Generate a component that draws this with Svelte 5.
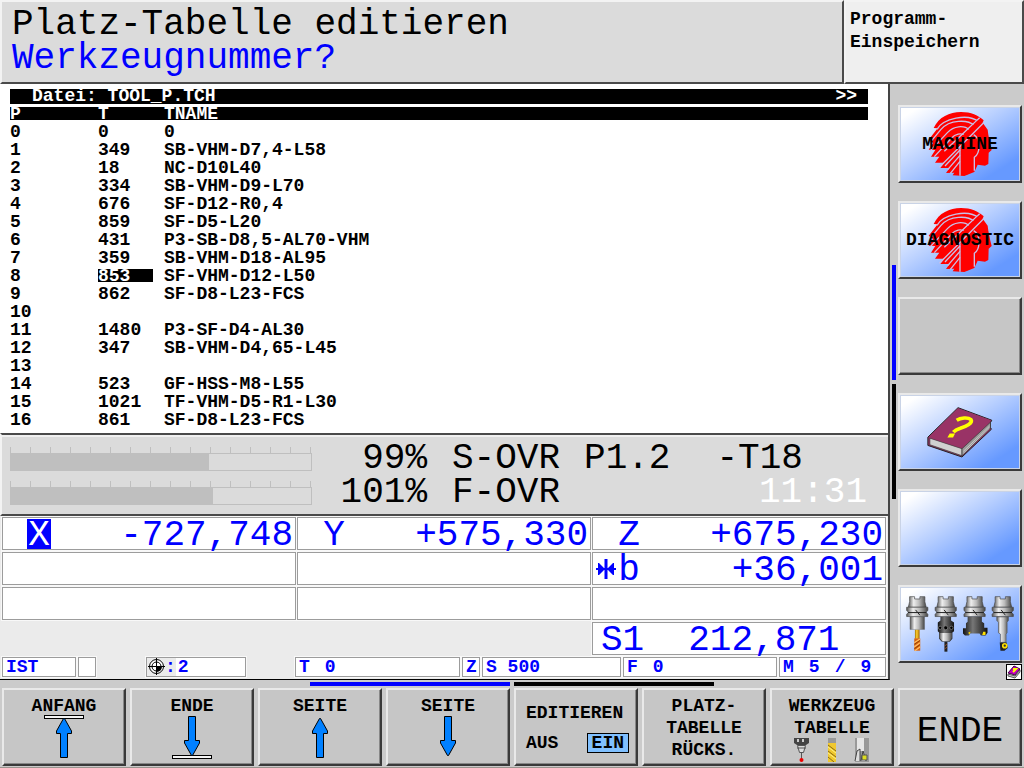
<script>
  const rows = [
    ['0', '0', '0'],
    ['1', '349', 'SB-VHM-D7,4-L58'],
    ['2', '18', 'NC-D10L40'],
    ['3', '334', 'SB-VHM-D9-L70'],
    ['4', '676', 'SF-D12-R0,4'],
    ['5', '859', 'SF-D5-L20'],
    ['6', '431', 'P3-SB-D8,5-AL70-VHM'],
    ['7', '359', 'SB-VHM-D18-AL95'],
    ['8', '853', 'SF-VHM-D12-L50'],
    ['9', '862', 'SF-D8-L23-FCS'],
    ['10', '', ''],
    ['11', '1480', 'P3-SF-D4-AL30'],
    ['12', '347', 'SB-VHM-D4,65-L45'],
    ['13', '', ''],
    ['14', '523', 'GF-HSS-M8-L55'],
    ['15', '1021', 'TF-VHM-D5-R1-L30'],
    ['16', '861', 'SF-D8-L23-FCS']
  ];
  const selected = 8;
  const gauges = [66, 67.2];
  const ticks = Array.from({ length: 16 }, (_, i) => i);
</script>

{#snippet head()}
  <svg class="head" viewBox="441 329 192 198" width="64" height="66" aria-hidden="true">
    <path fill="#f00" d="M458 380C474 347 505 332 540 332C570 332 592 342 608 357L605 364L620 385L622 400L628 430L632 446L623 454L622 488L612 493L590 490L580 512L550 524L515 522L520 514L495 515L506 500L478 500L490 484L462 484L475 466L450 466L463 446L443 445L456 425L443 415L470 381Z" />
    <g fill="none" stroke="#c9bfe6" stroke-width="4">
      <path d="M468 384C486 352 560 334 594 362" />
      <path d="M452 418L480 384C506 354 560 354 580 372" />
      <path d="M448 448L500 393C518 374 548 370 566 386" />
      <path d="M460 466L512 410C522 398 540 394 552 402" />
      <path d="M596 349L490 450M608 364L475 498M537 446L492 494M537 462L500 505M537 480L508 516" />
      <path d="M537 438V523M580 508V468C598 455 600 412 578 400" />
    </g>
    <path fill="#f00" d="M592 355L600 367L532 430L520 428ZM541 446H576V508L556 521H541Z" />
  </svg>
{/snippet}

{#snippet arrow(down, bar)}
  <svg class="arrow" viewBox="0 0 42 44" width="42" height="44" aria-hidden="true">
    <g transform={down ? 'rotate(180 21 22)' : undefined} stroke="#000">
      {#if bar}<rect x="1.500" y="0.500" width="39" height="3" fill="#f4f4f4" />{/if}
      <path fill="#0080ff" d="M20.500 3.500H21.500L28.500 16V18.500H24.500V42.500H17.500V18.500H13.500V16Z" />
    </g>
  </svg>
{/snippet}

{#snippet holder(x)}
  <g transform={`translate(${x} 0)`}>
    <path fill="url(#metal)" stroke="#444" stroke-width="2" d="M-23 73H-8V80H8V73H23V88L27 105H-27L-23 88Z" />
    <path fill="url(#metal)" stroke="#444" stroke-width="2" d="M-32 105H32V115L26 120L32 126V133H-32V126L-26 120L-32 115Z" />
    <path stroke="#222" stroke-width="3" d="M-28 121H28M-5 113L8 129" />
  </g>
{/snippet}

<div class="screen">
  <header>
    <div class="panel title">
      <h1>Platz-Tabelle editieren</h1>
      <label for="tool-number">Werkzeugnummer?</label>
    </div>
    <div class="panel mode">Programm-<br />Einspeichern</div>
  </header>

  <div class="body">
    <main>
      <section class="file">
        <div class="strip"><span>Datei: TOOL_P.TCH</span><span>&gt;&gt;</span></div>
        <table>
          <thead>
            <tr>
              <th class="place"><span>P</span></th>
              <th class="tool"><span>T</span></th>
              <th><span>TNAME</span></th>
            </tr>
          </thead>
          <tbody>
            {#each rows as [p, t, name], i}
              <tr>
                <td>{p}</td>
                <td class:editing={i === selected}>
                  {#if i === selected}<input id="tool-number" value={t} />{:else}{t}{/if}
                </td>
                <td>{name}</td>
              </tr>
            {/each}
          </tbody>
        </table>
      </section>

      <section class="panel override">
        <div class="gauges">
          {#each gauges as value}
            <div class="gauge">
              <div class="ticks">{#each ticks as tick (tick)}<i></i>{/each}</div>
              <div class="track"><div class="fill" style="width: {value}%"></div></div>
            </div>
          {/each}
        </div>
        <div class="percent"><div>99%</div><div>101%</div></div>
        <div class="info">
          <div><span>S-OVR</span><span>P1.2</span><span class="t18">-T18</span></div>
          <div><span>F-OVR</span><time>11:31</time></div>
        </div>
      </section>

      <section class="position">
        <div class="axes">
          <div class="cell"><i></i><b class="active">X</b><span>-727,748</span></div>
          <div class="cell"><i></i><b>Y</b><span>+575,330</span></div>
          <div class="cell"><i></i><b>Z</b><span>+675,230</span></div>
          <div class="cell"></div>
          <div class="cell"></div>
          <div class="cell">
            <i>
              <svg viewBox="0 0 20 20" width="20" height="20" aria-hidden="true">
                <path fill="none" stroke="#00f" stroke-width="3" d="M10 0V20" />
                <path fill="none" stroke="#00f" stroke-width="2" d="M0 10H20" />
                <path fill="#00f" d="M2 4H3L8 9V11L3 16H2ZM18 4H17L12 9V11L17 16H18Z" />
              </svg>
            </i>
            <b>b</b><span>+36,001</span>
          </div>
          <div class="cell"></div>
          <div class="cell"></div>
          <div class="cell"></div>
          <div class="cell spindle"><b>S1</b><span>212,871</span></div>
        </div>
        <div class="status">
          <div class="cell">IST</div>
          <div class="cell"></div>
          <div class="cell datum">
            <span class="preset">
              <svg viewBox="0 0 18 18" width="18" height="18" aria-hidden="true">
                <circle cx="9.500" cy="8.500" r="7" fill="#fff" stroke="#000" />
                <circle cx="9.500" cy="8.500" r="4.500" fill="none" stroke="#000" />
                <path d="M9.500 8.500H15A6 6 0 0 1 9.500 14Z" />
                <path fill="none" stroke="#000" d="M9.500 0V17M1 8.500H18" />
              </svg>:</span><span>2</span>
          </div>
          <div class="cell wide">T<span>0</span></div>
          <div class="cell">Z</div>
          <div class="cell">S 500</div>
          <div class="cell wide">F<span>0</span></div>
          <div class="cell modes"><span>M</span><span>5</span><span>/</span><span>9</span></div>
        </div>
      </section>
    </main>

    <aside>
      <div class="pages"><i class="on"></i><i></i></div>
      <div class="keys">
        <button class="key blue">{@render head()}<span>MACHINE</span></button>
        <button class="key blue">{@render head()}<span>DIAGNOSTIC</span></button>
        <button class="key" aria-label="Frei"></button>
        <button class="key blue" aria-label="Hilfe">
          <svg viewBox="108 78 204 160" width="68" height="53" aria-hidden="true">
            <path fill="#993366" stroke="#222" stroke-width="3" d="M113 172L204 83L306 121L302 128V144L305 148L216 232L113 197Z" />
            <path fill="#d0d0d0" stroke="#333" stroke-width="2" d="M119 175L216 207V228L119 195Z" />
            <path fill="#999" stroke="#333" stroke-width="2" d="M216 207L302 127V144L216 228Z" />
            <path fill="none" stroke="#ddd" stroke-width="2" d="M220 215L299 139M220 221L299 145" />
            <path fill="#993366" d="M116 172L204 85L304 121L215 204Z" />
            <path fill="none" stroke="#ff0" stroke-width="11" d="M200 121C211 114 234 111 243 119C250 130 229 139 211 145C201 148 195 151 190 157" />
            <path fill="#ff0" d="M179 161H195L189 173H172Z" />
          </svg>
        </button>
        <button class="key blue" aria-label="Frei"></button>
        <button class="key blue" aria-label="Werkzeuge">
          <svg viewBox="46 68 330 175" width="110" height="58" aria-hidden="true">
            <defs>
              <linearGradient id="metal">
                <stop offset="0" stop-color="#555" /><stop offset="0.300" stop-color="#eee" />
                <stop offset="0.600" stop-color="#bbb" /><stop offset="1" stop-color="#444" />
              </linearGradient>
              <linearGradient id="dark">
                <stop offset="0" stop-color="#111" /><stop offset="0.400" stop-color="#777" />
                <stop offset="1" stop-color="#111" />
              </linearGradient>
              <linearGradient id="brass">
                <stop offset="0" stop-color="#a07000" /><stop offset="0.400" stop-color="#ffd030" />
                <stop offset="1" stop-color="#a06000" />
              </linearGradient>
            </defs>
            {@render holder(82)}
            <path fill="url(#metal)" stroke="#555" d="M60 134H104V172H60Z" />
            <path fill="url(#brass)" d="M75 173H89V200H75Z" />
            <path fill="#d86010" d="M73 199H91V236H73Z" />
            <path stroke="#ffc060" stroke-width="4" d="M73 212L90 201M73 225L90 212M75 236L91 224" />
            <path stroke="#703000" stroke-width="2" d="M73 217L90 205M73 230L90 218" />
            {@render holder(168)}
            <path fill="url(#dark)" d="M152 134H184V145L193 151V177L188 181V200L180 209H156L148 200V181L144 177V151L152 145Z" />
            <path fill="url(#metal)" d="M149 183H187V198L179 207H158L149 198Z" />
            <g fill="#000" stroke="#888" stroke-width="2"><circle cx="151" cy="167" r="5" /><circle cx="168" cy="167" r="6" /><circle cx="185" cy="167" r="5" /></g>
            <path fill="#222" d="M164 209H173V239H164Z" />
            <path stroke="#c06030" stroke-width="2" d="M164 222L173 216M164 231L173 225" />
            {@render holder(255)}
            <path fill="url(#dark)" d="M234 134H277V149L284 153V167H294V182L288 190H274L270 184H242L238 190H226L220 184V168H229V153L234 149Z" />
            <path fill="#ffe000" d="M281 179H288V189H278ZM236 181L243 179L239 188Z" />
            {@render holder(340)}
            <path fill="url(#metal)" stroke="#555" stroke-width="2" d="M322 134H357V145L353 150V182L350 186V211H333V186L327 182V150L322 145Z" />
            <path fill="#222" d="M331 211H352L355 228L345 236H333Z" />
            <circle cx="346" cy="221" r="6" fill="#333" stroke="#ffe000" stroke-width="5" />
          </svg>
        </button>
      </div>
      <svg class="note" viewBox="0 0 16 16" width="16" height="16" aria-hidden="true">
        <rect x="0.500" y="0.500" width="15" height="15" fill="#fff" stroke="#000" />
        <path fill="#c000c0" stroke="#404" d="M2 9L8 2L14 5L9 11Z" />
        <path fill="#ccc" stroke="#555" d="M2 10L9 12L14 6V8L9 14L2 12Z" />
        <path fill="none" stroke="#ff0" stroke-width="2" d="M7 5L10 5L7 8" />
      </svg>
    </aside>
  </div>

  <footer>
    <div class="pages"><i class="on"></i><i></i></div>
    <nav>
      <button class="key soft">ANFANG{@render arrow(false, true)}</button>
      <button class="key soft">ENDE{@render arrow(true, true)}</button>
      <button class="key soft">SEITE{@render arrow(false, false)}</button>
      <button class="key soft">SEITE{@render arrow(true, false)}</button>
      <button class="key toggle">
        <span>EDITIEREN</span>
        <span class="choice"><span>AUS</span><span class="ein">EIN</span></span>
      </button>
      <button class="key soft"><span>PLATZ-</span><span>TABELLE</span><span>RÜCKS.</span></button>
      <button class="key soft">
        <span>WERKZEUG</span><span>TABELLE</span>
        <svg class="tools" viewBox="0 0 76 24" width="76" height="24" aria-hidden="true">
          <path fill="#444" d="M0 0H15V5L12 7H3L0 5Z" />
          <path fill="#ccc" d="M3 1H5V4H3ZM8 1H10V4H8Z" />
          <path fill="#ddd" stroke="#555" d="M3.500 7.500H11.500L9.500 14.500H5.500Z" />
          <path stroke="#555" d="M3 10H12M7.500 15V21" />
          <circle cx="7.500" cy="22" r="2" fill="#e00" />
          <rect x="34" width="8" height="24" fill="#f0c830" />
          <rect x="34" width="8" height="5" fill="#999" />
          <path stroke="#8a6a10" d="M34 7L42 13M34 13L42 19M34 19L40 24" />
          <path stroke="#fff080" d="M34 9L42 15M34 15L42 21" />
          <rect x="61" width="14" height="24" fill="#999" />
          <rect x="63" width="7" height="13" fill="#e6e6e6" />
          <path fill="#ddd" stroke="#444" d="M61 23L63 13L66 11V23M67 23L69 13L72 23" />
          <path fill="#dddd20" stroke="#555" d="M68 17H73V22H68Z" />
        </svg>
      </button>
      <button class="key end">ENDE</button>
    </nav>
  </footer>
</div>

<style>
  :global(body) { margin: 0; background: #cbcbcb; }
  .screen {
    min-height: 100vh;
    display: flex;
    flex-direction: column;
    background: #cbcbcb;
    color: #000;
    font: bold 18px/22px "Liberation Mono", monospace;
    white-space: nowrap;
  }
  .screen, .screen * { box-sizing: border-box; }
  i, time { font-style: normal; }
  svg { display: block; flex: none; }

  .panel {
    background: #dbdbdb;
    border: 2px solid;
    border-color: #f3f3f3 #4a4a4a #4a4a4a #f3f3f3;
  }
  header { display: grid; grid-template-columns: 1fr 180px; min-height: 84px; }
  .title { padding: 6px 11px 4px 10px; }
  h1, .title label {
    display: block;
    margin: 0;
    font-size: 36px;
    font-weight: normal;
    line-height: 34px;
  }
  .title label { color: #00f; }
  .mode { background: #efefef; padding: 6px 4px; line-height: 23px; }

  .body { flex: 1; display: grid; grid-template-columns: 1fr 134px; }
  main {
    display: flex;
    flex-direction: column;
    border-right: 2px solid #444;
    border-bottom: 1px solid #000;
    background: #fff;
    min-width: 0;
  }
  .file { flex: 1; padding: 5px 20px 2px 10px; line-height: 13px; }
  .strip {
    display: flex;
    justify-content: space-between;
    height: 15px;
    margin-bottom: 3px;
    padding: 0 11px 0 22px;
    background: #000;
    color: #fff;
    line-height: 15px;
  }
  table { width: 100%; border-collapse: collapse; table-layout: fixed; }
  th, td { height: 18px; padding: 0; text-align: left; vertical-align: top; }
  td { padding: 1px 0 4px; }
  .editing { padding: 0 0 5px; }
  th span { display: block; height: 13px; background: #000; color: #fff; line-height: 15px; }
  .place { width: 88px; }
  .tool { width: 66px; }
  input {
    display: block;
    width: 55px;
    height: 13px;
    padding: 1px 0 0;
    border: 0;
    border-radius: 0;
    background: #000;
    color: #fff;
    font: inherit;
    outline: 0;
  }

  .override {
    display: grid;
    grid-template-columns: 302px 108px 1fr;
    padding: 6px 8px 2px;
    border-top: 2px solid #4a4a4a;
    border-right: 0;
    box-shadow: inset 0 2px #f0f0f0;
    font-size: 36px;
    font-weight: normal;
    line-height: 34px;
  }
  .gauges { display: grid; gap: 10px; padding: 6px 0 7px; align-content: start; }
  .ticks { display: flex; justify-content: space-between; height: 6px; padding-right: 1px; }
  .ticks i { width: 1px; background: #bfbfbf; }
  .track { height: 18px; border: 1px solid #bfbfbf; }
  .fill { height: 100%; background: #bfbfbf; }
  .percent { text-align: right; padding: 1px 1px 0 0; margin-right: -8px; }
  .info { padding: 1px 0 0 32px; }
  .info div { display: flex; gap: 24px; }
  .t18 { margin-left: 22px; }
  time { margin-left: auto; padding-right: 13px; color: #fff; }

  .position { padding: 1px 2px 2px; background: #ebebeb; color: #00f; }
  .axes { display: grid; grid-template-columns: repeat(3, 1fr); gap: 1px; row-gap: 2px; }
  .cell {
    display: flex;
    align-items: center;
    min-height: 33px;
    background: #fff;
    border: 1px solid #9c9c9c;
    box-shadow: 0 0 0 1px #f8f8f8;
  }
  .axes .cell { font-size: 36px; font-weight: normal; line-height: 26px; padding: 1px 2px 0 0; }
  .axes i { width: 24px; padding-left: 3px; }
  .axes b, .axes span { padding-top: 4px; }
  .axes b { font-weight: normal; width: 24px; text-align: center; }
  .axes b.active { background: #00f; color: #fff; }
  .axes .cell > span { margin-left: auto; }
  .axes .spindle { grid-column: 3; padding-left: 8px; gap: 44px; }
  .axes .spindle b { width: auto; }
  .axes .spindle span { margin-left: 0; }
  .status {
    display: grid;
    grid-template-columns: 74fr 18fr 46fr 100fr 45fr 165fr 18fr 139fr 154fr 107fr;
    gap: 2px;
    margin-top: 2px;
  }
  .status .cell { min-height: 20px; line-height: 18px; padding-left: 3px; min-width: 0; }
  .status .datum { grid-column: 4; padding-left: 0; }
  .status .wide { gap: 15px; }
  .status .datum + .wide { grid-column: 6; }
  .preset { display: flex; background: #ebebeb; margin-right: 2px; }
  .status .modes { gap: 15px; }

  aside {
    display: grid;
    grid-template-columns: 4px 1fr;
    grid-template-rows: 1fr auto;
    column-gap: 2px;
    padding: 0 2px;
  }
  .pages { display: flex; align-items: center; justify-content: center; gap: 4px; }
  .pages i { background: #000; }
  .pages .on { background: #00f; }
  aside .pages { flex-direction: column; grid-row: 1 / 3; }
  aside .pages i { width: 4px; height: 115px; }
  .keys { display: grid; gap: 18px; padding: 21px 0 1px; align-content: start; }
  .note { grid-column: 2; justify-self: end; }

  .key {
    position: relative;
    display: flex;
    align-items: center;
    justify-content: center;
    height: 78px;
    min-width: 0;
    padding: 0;
    border: 2px solid;
    border-color: #e9e9e9 #3a3a3a #3a3a3a #e9e9e9;
    border-radius: 0;
    background: #c6c6c6;
    box-shadow: inset -1px -1px #888;
    color: #000;
    font: inherit;
  }
  .blue {
    background: linear-gradient(148deg, #fff 8%, #b9d0ff 44%, #6699ff 84%);
    box-shadow: inset 0 0 0 1px #c9d3e6;
  }
  .blue span { position: absolute; }

  footer { border-bottom: 1px solid #99948e; padding-bottom: 1px; }
  footer .pages { height: 8px; }
  footer .pages i { width: 200px; height: 4px; }
  nav { display: grid; grid-template-columns: repeat(8, 1fr); gap: 4px; padding: 0 2px; }
  .soft { flex-direction: column; justify-content: flex-start; padding-top: 5px; }
  .soft .arrow { margin-top: -2px; }
  .tools { margin-top: -1px; }
  .toggle { flex-direction: column; align-items: stretch; gap: 8px; padding: 2px 7px 0 10px; text-align: left; }
  .choice { display: flex; justify-content: space-between; align-items: center; }
  .ein { padding: 0 4px; border: 1px solid #000; background: #80c0ff; line-height: 18px; }
  .end { padding-top: 9px; font-size: 36px; font-weight: normal; }
</style>
